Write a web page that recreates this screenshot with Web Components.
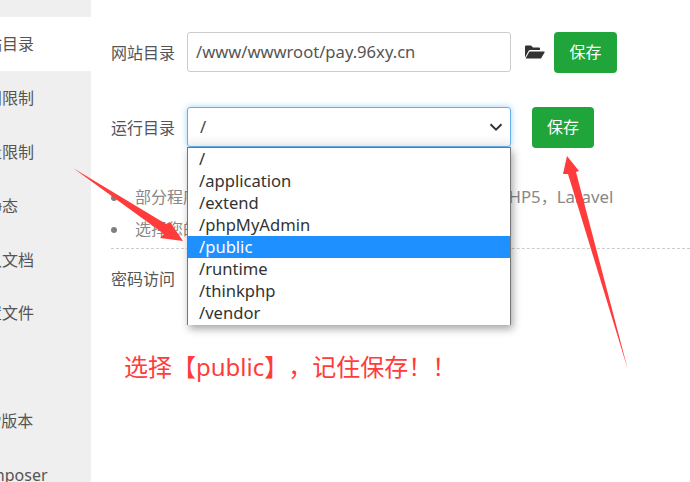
<!DOCTYPE html>
<html>
<head>
<meta charset="utf-8">
<style>
  html, body { margin: 0; height: 100%; overflow: hidden; background: #fff; }
</style>
</head>
<body>
<site-config-page></site-config-page>

<template id="side-menu-tpl">
  <style>
    :host { display: block; width: 91px; height: 482px; flex: none; background: #efefef; overflow: hidden; padding-top: 17px; box-sizing: border-box; }
    .item { height: 53.9px; margin-left: -30px; width: 121px; line-height: 54px; white-space: nowrap; font-size: 16px; color: #555; }
    .item.on { background: #fff; }
  </style>
  <div class="item on">网站目录</div>
  <div class="item">访问限制</div>
  <div class="item">流量限制</div>
  <div class="item">伪静态</div>
  <div class="item">默认文档</div>
  <div class="item">配置文件</div>
  <div class="item"></div>
  <div class="item">PHP版本</div>
  <div class="item">Composer</div>
</template>

<template id="form-row-tpl">
  <style>
    :host { display: flex; align-items: center; height: 40px; }
    .label { width: 76px; flex: none; font-size: 16px; color: #555; white-space: nowrap; }
  </style>
  <span class="label"></span>
  <slot></slot>
</template>

<template id="save-button-tpl">
  <style>
    :host { display: block; flex: none; }
    div { width: var(--w, 63px); height: 41px; background: #20a53a; color: #fff; border-radius: 4px; font-size: 16px; line-height: 41px; text-align: center; }
  </style>
  <div><slot></slot></div>
</template>

<template id="path-select-tpl">
  <style>
    :host { display: block; position: relative; width: 324px; height: 40px; flex: none; }
    .box { box-sizing: border-box; height: 40px; border: 1px solid #66afe9; border-radius: 3px; background: linear-gradient(#fff 70%, #f1f1f1); box-shadow: 0 0 6px rgba(102,175,233,.6); padding-left: 12px; font-size: 16.6px; line-height: 38px; color: #444; display: flex; justify-content: space-between; align-items: center; padding-right: 7px; }
    svg { display: block; }
    .list { position: absolute; left: 0; top: 40px; width: 324px; box-sizing: border-box; height: 178px; overflow: hidden; background: #fff; border: 1px solid #767676; border-bottom: 0; box-shadow: 2px 4px 8px rgba(0,0,0,.35); z-index: 5; font-size: 16.6px; color: #333; }
    .opt { height: 22px; line-height: 22px; padding-left: 11px; }
    .opt.sel { background: #1e90ff; color: #fff; }
  </style>
  <div class="box">
    <span>/</span>
    <svg width="14" height="10" viewBox="0 0 14 10"><path d="M1.5 2.2 7 7.6 12.500 2.2" fill="none" stroke="#333" stroke-width="2"/></svg>
  </div>
  <div class="list">
    <div class="opt">/</div>
    <div class="opt">/application</div>
    <div class="opt">/extend</div>
    <div class="opt">/phpMyAdmin</div>
    <div class="opt sel">/public</div>
    <div class="opt">/runtime</div>
    <div class="opt">/thinkphp</div>
    <div class="opt">/vendor</div>
  </div>
</template>

<template id="site-config-page-tpl">
  <style>
    :host { display: flex; width: 690px; height: 482px; position: relative; overflow: hidden; font-family: "Noto Sans", "Noto Sans CJK SC", sans-serif; background: #fff; text-spacing-trim: space-all; }
    main { flex: 1; padding: 32px 0 0 20px; min-width: 0; }
    .path { box-sizing: border-box; width: 324px; height: 40px; flex: none; border: 1px solid #ccc; border-radius: 3px; padding-left: 8px; font-size: 16.6px; line-height: 38px; color: #555; }
    .folder { margin: 0 9px 0 13px; flex: none; display: block; }
    .second { margin-top: 35px; }
    .second save-button { margin-left: 21px; --w: 62px; }
    ul { margin: 39px 0 0; padding: 0 0 0 24px; list-style: none; font-size: 16px; color: #888; height: 62px; }
    li { position: relative; height: 32px; line-height: 22px; white-space: nowrap; }
    li span { font-size: 16.8px; }
    li::before { content: ""; position: absolute; left: -24px; top: 9px; width: 6px; height: 6px; border-radius: 50%; background: #808080; }
    hr { border: 0; border-top: 1px dashed #ccc; margin: 0; }
    .third { margin-top: 9px; }
    .note { position: absolute; left: 124px; top: 349px; font-size: 24px; line-height: 36px; color: #ff3b3b; white-space: nowrap; z-index: 6; }
    .arrows { position: absolute; left: 0; top: 0; z-index: 3; pointer-events: none; }
  </style>
  <side-menu></side-menu>
  <main>
    <form-row class="first" label="网站目录">
      <div class="path">/www/wwwroot/pay.96xy.cn</div>
      <svg class="folder" width="21" height="16" viewBox="0 0 21 16"><path d="M1 13.500V2.500Q1 1.500 2 1.500H7L9 3.500H15Q16 3.500 16 4.500V6H6Q5 6 4.500 7Z" fill="#333"/><path d="M5.500 7.500H20Q21 7.500 20.500 8.500L17 14.500H1.500Z" fill="#333"/></svg>
      <save-button>保存</save-button>
    </form-row>
    <form-row class="second" label="运行目录">
      <path-select></path-select>
      <save-button>保存</save-button>
    </form-row>
    <ul>
      <li>部分程序需要指定二级目录作为运行目录，如<span>ThinkPHP5</span>，<span>Laravel</span></li>
      <li>选择您的运行目录，点保存即可</li>
    </ul>
    <hr>
    <form-row class="third" label="密码访问"></form-row>
  </main>
  <svg class="arrows" width="690" height="482" viewBox="0 0 690 482">
    <path d="M73 168 166 224 170 222 183 241 160 238 164 234Z" fill="#ff3b3b"/>
    <path d="M628 370 576 172 579 171 567 156 563 174 568 174Z" fill="#ff3b3b"/>
  </svg>
  <div class="note">选择【public】，记住保存！！</div>
</template>

<script>
  // plain wrapper: clones a template into an open shadow root
  class TplElement extends HTMLElement {
    constructor(id) {
      super();
      this.attachShadow({ mode: "open" });
      this.shadowRoot.appendChild(document.getElementById(id).content.cloneNode(true));
    }
  }
  class SideMenu extends TplElement { constructor() { super("side-menu-tpl"); } }
  class SaveButton extends TplElement { constructor() { super("save-button-tpl"); } }
  class PathSelect extends TplElement { constructor() { super("path-select-tpl"); } }
  class SiteConfigPage extends TplElement { constructor() { super("site-config-page-tpl"); } }
  class FormRow extends TplElement {
    constructor() { super("form-row-tpl"); }
    connectedCallback() {
      this.shadowRoot.querySelector(".label").textContent = this.getAttribute("label") || "";
    }
  }
  customElements.define("side-menu", SideMenu);
  customElements.define("save-button", SaveButton);
  customElements.define("path-select", PathSelect);
  customElements.define("form-row", FormRow);
  customElements.define("site-config-page", SiteConfigPage);
</script>
</body>
</html>
